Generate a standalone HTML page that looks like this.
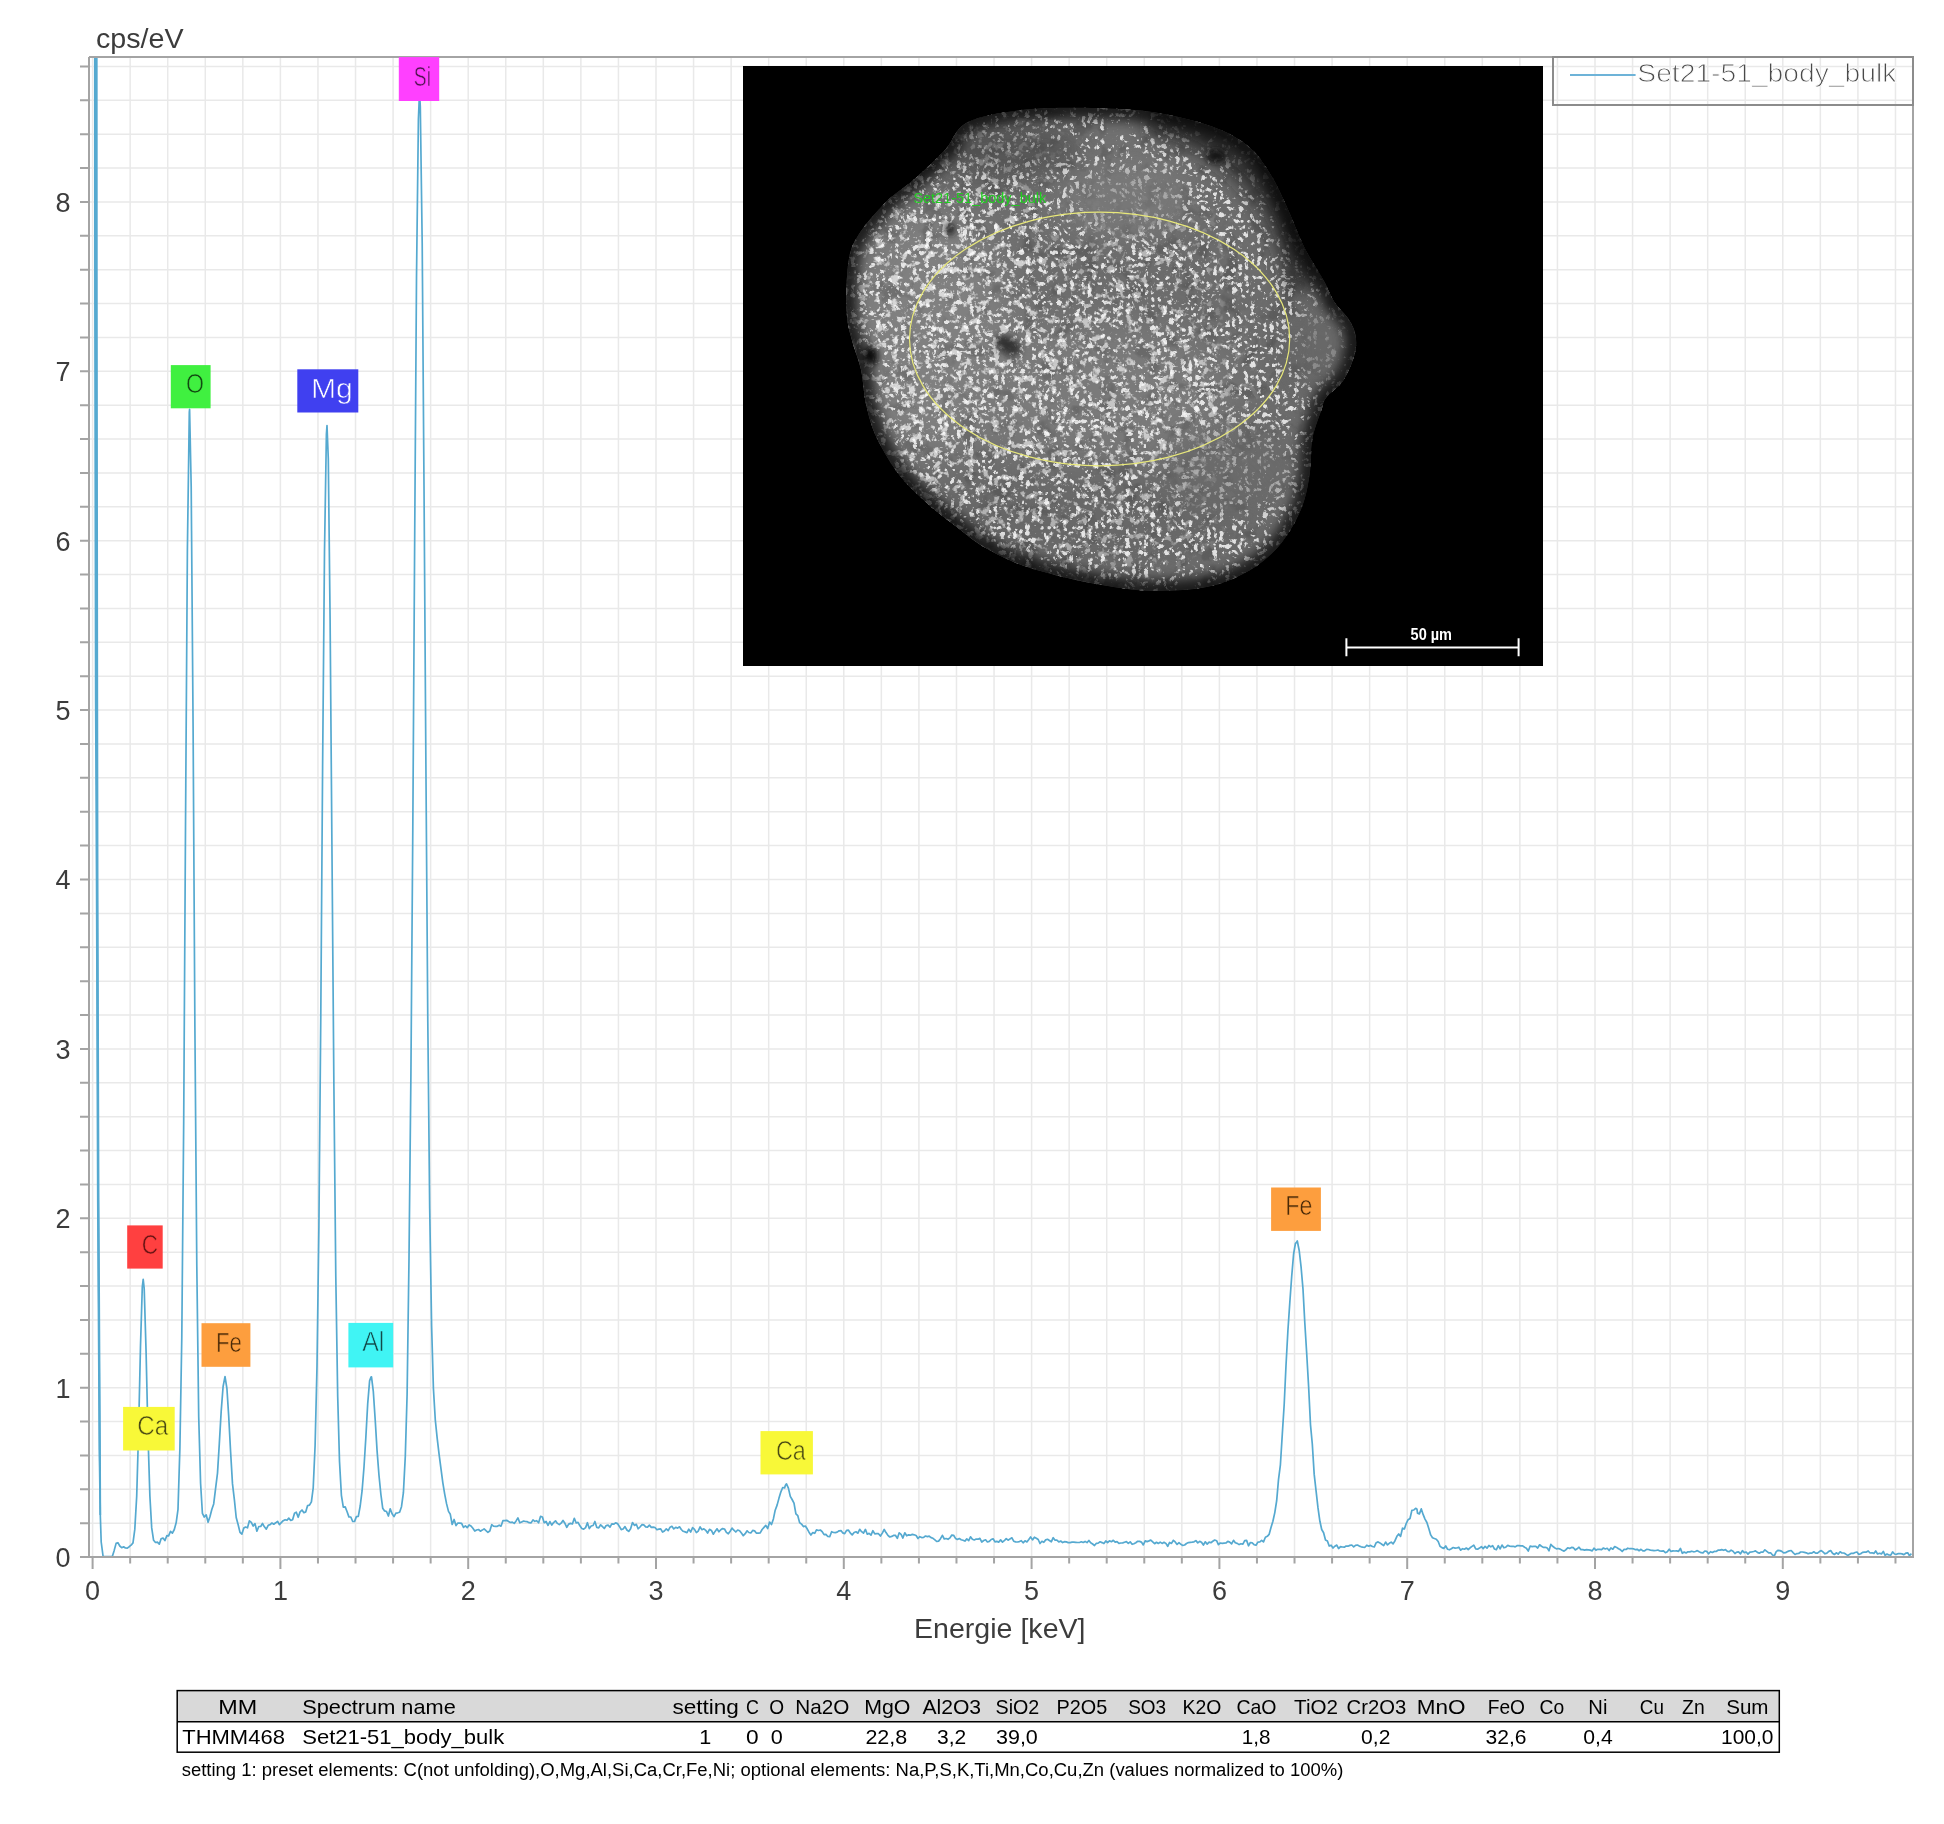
<!DOCTYPE html>
<html><head><meta charset="utf-8"><title>EDX spectrum</title><style>html,body{margin:0;padding:0;background:#fff;width:1944px;height:1824px;overflow:hidden}</style></head><body>
<svg width="1944" height="1824" viewBox="0 0 1944 1824" style="display:block;font-family:'Liberation Sans',sans-serif">
<rect width="1944" height="1824" fill="#ffffff"/>
<path d="M92.60 57V1557M130.16 57V1557M167.72 57V1557M205.28 57V1557M242.84 57V1557M280.40 57V1557M317.96 57V1557M355.52 57V1557M393.08 57V1557M430.64 57V1557M468.20 57V1557M505.76 57V1557M543.32 57V1557M580.88 57V1557M618.44 57V1557M656.00 57V1557M693.56 57V1557M731.12 57V1557M768.68 57V1557M806.24 57V1557M843.80 57V1557M881.36 57V1557M918.92 57V1557M956.48 57V1557M994.04 57V1557M1031.60 57V1557M1069.16 57V1557M1106.72 57V1557M1144.28 57V1557M1181.84 57V1557M1219.40 57V1557M1256.96 57V1557M1294.52 57V1557M1332.08 57V1557M1369.64 57V1557M1407.20 57V1557M1444.76 57V1557M1482.32 57V1557M1519.88 57V1557M1557.44 57V1557M1595.00 57V1557M1632.56 57V1557M1670.12 57V1557M1707.68 57V1557M1745.24 57V1557M1782.80 57V1557M1820.36 57V1557M1857.92 57V1557M1895.48 57V1557M89 1523.22H1913M89 1489.34H1913M89 1455.46H1913M89 1421.58H1913M89 1387.70H1913M89 1353.82H1913M89 1319.94H1913M89 1286.06H1913M89 1252.18H1913M89 1218.30H1913M89 1184.42H1913M89 1150.54H1913M89 1116.66H1913M89 1082.78H1913M89 1048.90H1913M89 1015.02H1913M89 981.14H1913M89 947.26H1913M89 913.38H1913M89 879.50H1913M89 845.62H1913M89 811.74H1913M89 777.86H1913M89 743.98H1913M89 710.10H1913M89 676.22H1913M89 642.34H1913M89 608.46H1913M89 574.58H1913M89 540.70H1913M89 506.82H1913M89 472.94H1913M89 439.06H1913M89 405.18H1913M89 371.30H1913M89 337.42H1913M89 303.54H1913M89 269.66H1913M89 235.78H1913M89 201.90H1913M89 168.02H1913M89 134.14H1913M89 100.26H1913M89 66.38H1913" stroke="#e9e9e9" stroke-width="1.5" fill="none"/>
<path d="M80 1557.10H89M80 1523.22H89M80 1489.34H89M80 1455.46H89M80 1421.58H89M80 1387.70H89M80 1353.82H89M80 1319.94H89M80 1286.06H89M80 1252.18H89M80 1218.30H89M80 1184.42H89M80 1150.54H89M80 1116.66H89M80 1082.78H89M80 1048.90H89M80 1015.02H89M80 981.14H89M80 947.26H89M80 913.38H89M80 879.50H89M80 845.62H89M80 811.74H89M80 777.86H89M80 743.98H89M80 710.10H89M80 676.22H89M80 642.34H89M80 608.46H89M80 574.58H89M80 540.70H89M80 506.82H89M80 472.94H89M80 439.06H89M80 405.18H89M80 371.30H89M80 337.42H89M80 303.54H89M80 269.66H89M80 235.78H89M80 201.90H89M80 168.02H89M80 134.14H89M80 100.26H89M80 66.38H89M92.60 1557V1569M130.16 1557V1563.5M167.72 1557V1563.5M205.28 1557V1563.5M242.84 1557V1563.5M280.40 1557V1569M317.96 1557V1563.5M355.52 1557V1563.5M393.08 1557V1563.5M430.64 1557V1563.5M468.20 1557V1569M505.76 1557V1563.5M543.32 1557V1563.5M580.88 1557V1563.5M618.44 1557V1563.5M656.00 1557V1569M693.56 1557V1563.5M731.12 1557V1563.5M768.68 1557V1563.5M806.24 1557V1563.5M843.80 1557V1569M881.36 1557V1563.5M918.92 1557V1563.5M956.48 1557V1563.5M994.04 1557V1563.5M1031.60 1557V1569M1069.16 1557V1563.5M1106.72 1557V1563.5M1144.28 1557V1563.5M1181.84 1557V1563.5M1219.40 1557V1569M1256.96 1557V1563.5M1294.52 1557V1563.5M1332.08 1557V1563.5M1369.64 1557V1563.5M1407.20 1557V1569M1444.76 1557V1563.5M1482.32 1557V1563.5M1519.88 1557V1563.5M1557.44 1557V1563.5M1595.00 1557V1569M1632.56 1557V1563.5M1670.12 1557V1563.5M1707.68 1557V1563.5M1745.24 1557V1563.5M1782.80 1557V1569M1820.36 1557V1563.5M1857.92 1557V1563.5M1895.48 1557V1563.5" stroke="#a4a4a4" stroke-width="2" fill="none"/>
<defs>
<filter id="clus" x="743" y="66" width="800" height="600" filterUnits="userSpaceOnUse">
<feTurbulence type="fractalNoise" baseFrequency="0.12" numOctaves="4" seed="5" result="n"/>
<feColorMatrix in="n" type="matrix" values="0 0 0 0 1  0 0 0 0 1  0 0 0 0 1  7 0 0 0 -3.9"/>
</filter>
<filter id="dots" x="743" y="66" width="800" height="600" filterUnits="userSpaceOnUse">
<feTurbulence type="turbulence" baseFrequency="0.16" numOctaves="2" seed="3" result="n"/>
<feColorMatrix in="n" type="matrix" values="0 0 0 0 1  0 0 0 0 1  0 0 0 0 1  6 0 0 0 -2.0"/>
</filter>
<filter id="mott" x="743" y="66" width="800" height="600" filterUnits="userSpaceOnUse">
<feTurbulence type="fractalNoise" baseFrequency="0.05" numOctaves="3" seed="11" result="n"/>
<feColorMatrix in="n" type="matrix" values="0 0 0 0 0  0 0 0 0 0  0 0 0 0 0  -6 0 0 0 2.6"/>
</filter>
<filter id="blur10" x="-50%" y="-50%" width="200%" height="200%"><feGaussianBlur stdDeviation="10"/></filter>
<filter id="blur8" x="-50%" y="-50%" width="200%" height="200%"><feGaussianBlur stdDeviation="8"/></filter>
<filter id="blur6" x="-50%" y="-50%" width="200%" height="200%"><feGaussianBlur stdDeviation="6"/></filter>
<filter id="blur20" x="-50%" y="-50%" width="200%" height="200%"><feGaussianBlur stdDeviation="22"/></filter>
<filter id="blur4" x="-50%" y="-50%" width="200%" height="200%"><feGaussianBlur stdDeviation="3"/></filter>
<clipPath id="blobclip"><path d="M1025.7 109.6C1047.7 107.3 1078.2 107.7 1099.9 108.2C1121.6 108.7 1137.2 109.4 1155.8 112.4C1174.4 115.4 1196.3 120.7 1211.7 126.3C1227.1 131.9 1238.2 138.1 1248.0 146.0C1257.8 153.9 1263.9 163.7 1270.4 173.9C1276.9 184.1 1281.6 195.3 1287.2 207.4C1292.8 219.5 1298.0 234.5 1304.0 246.6C1310.0 258.7 1318.4 270.7 1323.5 280.0C1328.6 289.3 1330.5 296.0 1334.7 302.5C1338.9 309.0 1345.2 313.6 1348.7 319.2C1352.2 324.8 1354.8 329.9 1355.7 336.0C1356.6 342.1 1356.4 348.2 1354.3 355.6C1352.2 363.1 1347.8 373.7 1343.1 380.7C1338.4 387.7 1329.9 392.6 1326.3 397.5C1322.7 402.4 1323.8 403.0 1321.5 410.0C1319.2 417.0 1314.4 428.5 1312.4 439.5C1310.4 450.5 1311.5 464.2 1309.6 475.8C1307.7 487.4 1305.9 498.1 1301.2 509.3C1296.5 520.5 1289.5 533.1 1281.6 542.9C1273.7 552.7 1265.3 560.8 1253.7 568.0C1242.1 575.2 1228.0 582.2 1211.7 586.0C1195.4 589.8 1174.4 591.2 1155.8 591.0C1137.2 590.8 1120.9 588.6 1099.9 584.8C1078.9 581.0 1048.9 574.0 1030.0 568.0C1011.1 562.0 999.0 555.6 986.6 548.6C974.2 541.6 965.6 533.7 955.8 526.2C946.0 518.8 937.2 512.3 927.9 503.9C918.6 495.5 908.3 486.6 899.9 475.9C891.5 465.2 883.1 451.2 877.5 439.6C871.9 428.0 869.1 417.7 866.4 406.0C863.6 394.3 863.3 380.3 861.0 369.6C858.7 358.9 854.8 351.0 852.4 341.7C850.0 332.4 847.5 326.8 846.8 313.7C846.1 300.6 846.3 276.4 848.2 263.4C850.1 250.3 851.7 245.7 858.0 235.4C864.3 225.2 876.6 211.2 885.9 201.9C895.2 192.6 904.0 188.2 913.9 179.5C923.8 170.8 936.0 159.6 945.0 150.0C954.0 140.4 954.5 128.7 968.0 122.0C981.5 115.3 1003.7 111.9 1025.7 109.6Z"/></clipPath>
<mask id="clmask" maskUnits="userSpaceOnUse" x="743" y="66" width="800" height="600">
<rect x="743" y="66" width="800" height="600" fill="#000"/>
<g filter="url(#blur20)">
<ellipse cx="960" cy="340" rx="110" ry="170" fill="#fff"/>
<ellipse cx="1090" cy="400" rx="150" ry="110" fill="#e0e0e0"/>
<ellipse cx="1150" cy="270" rx="70" ry="60" fill="#c0c0c0"/>
<ellipse cx="1050" cy="520" rx="160" ry="60" fill="#b0b0b0"/>
<ellipse cx="980" cy="150" rx="80" ry="40" fill="#909090"/>
</g>
</mask>
</defs>
<rect x="743" y="66" width="800" height="600" fill="#000"/>
<g clip-path="url(#blobclip)">
<path d="M1025.7 109.6C1047.7 107.3 1078.2 107.7 1099.9 108.2C1121.6 108.7 1137.2 109.4 1155.8 112.4C1174.4 115.4 1196.3 120.7 1211.7 126.3C1227.1 131.9 1238.2 138.1 1248.0 146.0C1257.8 153.9 1263.9 163.7 1270.4 173.9C1276.9 184.1 1281.6 195.3 1287.2 207.4C1292.8 219.5 1298.0 234.5 1304.0 246.6C1310.0 258.7 1318.4 270.7 1323.5 280.0C1328.6 289.3 1330.5 296.0 1334.7 302.5C1338.9 309.0 1345.2 313.6 1348.7 319.2C1352.2 324.8 1354.8 329.9 1355.7 336.0C1356.6 342.1 1356.4 348.2 1354.3 355.6C1352.2 363.1 1347.8 373.7 1343.1 380.7C1338.4 387.7 1329.9 392.6 1326.3 397.5C1322.7 402.4 1323.8 403.0 1321.5 410.0C1319.2 417.0 1314.4 428.5 1312.4 439.5C1310.4 450.5 1311.5 464.2 1309.6 475.8C1307.7 487.4 1305.9 498.1 1301.2 509.3C1296.5 520.5 1289.5 533.1 1281.6 542.9C1273.7 552.7 1265.3 560.8 1253.7 568.0C1242.1 575.2 1228.0 582.2 1211.7 586.0C1195.4 589.8 1174.4 591.2 1155.8 591.0C1137.2 590.8 1120.9 588.6 1099.9 584.8C1078.9 581.0 1048.9 574.0 1030.0 568.0C1011.1 562.0 999.0 555.6 986.6 548.6C974.2 541.6 965.6 533.7 955.8 526.2C946.0 518.8 937.2 512.3 927.9 503.9C918.6 495.5 908.3 486.6 899.9 475.9C891.5 465.2 883.1 451.2 877.5 439.6C871.9 428.0 869.1 417.7 866.4 406.0C863.6 394.3 863.3 380.3 861.0 369.6C858.7 358.9 854.8 351.0 852.4 341.7C850.0 332.4 847.5 326.8 846.8 313.7C846.1 300.6 846.3 276.4 848.2 263.4C850.1 250.3 851.7 245.7 858.0 235.4C864.3 225.2 876.6 211.2 885.9 201.9C895.2 192.6 904.0 188.2 913.9 179.5C923.8 170.8 936.0 159.6 945.0 150.0C954.0 140.4 954.5 128.7 968.0 122.0C981.5 115.3 1003.7 111.9 1025.7 109.6Z" fill="#6c6c6c"/>
<g filter="url(#blur20)"><ellipse cx="930" cy="330" rx="85" ry="125" fill="#808080"/><ellipse cx="1100" cy="395" rx="135" ry="75" fill="#7a7a7a"/><ellipse cx="1110" cy="185" rx="80" ry="50" fill="#747474"/><ellipse cx="1090" cy="515" rx="170" ry="55" fill="#686868"/><ellipse cx="1320" cy="345" rx="40" ry="50" fill="#626262"/><ellipse cx="1000" cy="150" rx="80" ry="30" fill="#5a5a5a"/></g>
<rect x="743" y="66" width="800" height="600" fill="#000" filter="url(#mott)" opacity="0.12"/>
<rect x="743" y="66" width="800" height="600" fill="#fff" filter="url(#clus)" opacity="0.7" mask="url(#clmask)"/>
<rect x="743" y="66" width="800" height="600" fill="#fff" filter="url(#dots)" opacity="0.8"/>
<g filter="url(#blur10)"><path d="M1150 118 Q1235 135 1275 200 Q1300 245 1305 290" fill="none" stroke="#1e1e1e" stroke-width="34" opacity="0.8"/><ellipse cx="1322" cy="345" rx="30" ry="45" fill="#6a6a6a" opacity="0.75"/><ellipse cx="1130" cy="200" rx="60" ry="35" fill="#7c7c7c" opacity="0.6"/><ellipse cx="1010" cy="150" rx="70" ry="25" fill="#505050" opacity="0.5"/><ellipse cx="1230" cy="470" rx="70" ry="45" fill="#6a6a6a" opacity="0.5"/></g>
<g filter="url(#blur4)"><ellipse cx="871" cy="356" rx="7" ry="10" fill="#101010"/><ellipse cx="1008" cy="345" rx="14" ry="8" transform="rotate(30 1008 345)" fill="#303030"/><ellipse cx="950" cy="229" rx="5" ry="6" fill="#202020"/><ellipse cx="1216" cy="156" rx="10" ry="7" fill="#181818"/></g>
<path d="M1025.7 109.6C1047.7 107.3 1078.2 107.7 1099.9 108.2C1121.6 108.7 1137.2 109.4 1155.8 112.4C1174.4 115.4 1196.3 120.7 1211.7 126.3C1227.1 131.9 1238.2 138.1 1248.0 146.0C1257.8 153.9 1263.9 163.7 1270.4 173.9C1276.9 184.1 1281.6 195.3 1287.2 207.4C1292.8 219.5 1298.0 234.5 1304.0 246.6C1310.0 258.7 1318.4 270.7 1323.5 280.0C1328.6 289.3 1330.5 296.0 1334.7 302.5C1338.9 309.0 1345.2 313.6 1348.7 319.2C1352.2 324.8 1354.8 329.9 1355.7 336.0C1356.6 342.1 1356.4 348.2 1354.3 355.6C1352.2 363.1 1347.8 373.7 1343.1 380.7C1338.4 387.7 1329.9 392.6 1326.3 397.5C1322.7 402.4 1323.8 403.0 1321.5 410.0C1319.2 417.0 1314.4 428.5 1312.4 439.5C1310.4 450.5 1311.5 464.2 1309.6 475.8C1307.7 487.4 1305.9 498.1 1301.2 509.3C1296.5 520.5 1289.5 533.1 1281.6 542.9C1273.7 552.7 1265.3 560.8 1253.7 568.0C1242.1 575.2 1228.0 582.2 1211.7 586.0C1195.4 589.8 1174.4 591.2 1155.8 591.0C1137.2 590.8 1120.9 588.6 1099.9 584.8C1078.9 581.0 1048.9 574.0 1030.0 568.0C1011.1 562.0 999.0 555.6 986.6 548.6C974.2 541.6 965.6 533.7 955.8 526.2C946.0 518.8 937.2 512.3 927.9 503.9C918.6 495.5 908.3 486.6 899.9 475.9C891.5 465.2 883.1 451.2 877.5 439.6C871.9 428.0 869.1 417.7 866.4 406.0C863.6 394.3 863.3 380.3 861.0 369.6C858.7 358.9 854.8 351.0 852.4 341.7C850.0 332.4 847.5 326.8 846.8 313.7C846.1 300.6 846.3 276.4 848.2 263.4C850.1 250.3 851.7 245.7 858.0 235.4C864.3 225.2 876.6 211.2 885.9 201.9C895.2 192.6 904.0 188.2 913.9 179.5C923.8 170.8 936.0 159.6 945.0 150.0C954.0 140.4 954.5 128.7 968.0 122.0C981.5 115.3 1003.7 111.9 1025.7 109.6Z" fill="none" stroke="#000" stroke-width="22" filter="url(#blur6)" opacity="0.75"/>
</g>
<ellipse cx="1099.6" cy="339" rx="190.1" ry="126.8" fill="none" stroke="#e8e87a" stroke-width="1.2"/>
<text x="913.40" y="202.90" font-size="15" fill="#20cc20" textLength="132.82" lengthAdjust="spacingAndGlyphs">Set21-51_body_bulk</text>
<path d="M1346.4 647.4H1518.6M1346.4 638.3V656.3M1518.6 638.3V656.3" stroke="#fff" stroke-width="2" fill="none"/>
<text x="1410.60" y="639.80" font-size="16" font-weight="bold" fill="#fff" textLength="41.41" lengthAdjust="spacingAndGlyphs">50 µm</text>
<path d="M95.8 57.0 L95.9 300.0 L96.5 700.0 L97.1 880.0 L98.2 1200.0 L99.7 1450.0 L100.3 1515.0 L101.2 1542.0 L103.1 1556.5 L112.3 1556.5 L114.2 1550.4 L116.1 1543.4 L117.9 1542.7 L119.8 1546.0 L121.7 1547.7 L123.6 1546.8 L125.4 1548.0 L127.3 1548.1 L129.2 1546.7 L131.1 1545.2 L133.0 1542.9 L134.8 1529.4 L136.7 1496.3 L138.6 1430.3 L140.5 1345.7 L142.3 1286.8 L143.2 1279.3 L144.2 1288.5 L146.1 1352.6 L148.0 1435.8 L149.9 1496.3 L151.7 1527.9 L153.6 1540.3 L155.5 1542.5 L157.4 1542.2 L159.3 1544.2 L161.1 1538.8 L163.0 1538.0 L164.9 1540.6 L166.8 1535.7 L168.6 1535.8 L170.5 1531.4 L172.4 1533.2 L174.3 1529.5 L176.2 1522.6 L178.0 1509.3 L179.9 1448.0 L181.8 1337.1 L183.7 1121.5 L185.5 827.9 L187.4 549.1 L189.3 412.4 L189.6 409.4 L191.2 487.1 L193.1 728.3 L194.9 1027.6 L196.8 1265.2 L198.7 1416.4 L200.6 1483.5 L202.4 1513.3 L204.3 1517.0 L206.2 1514.8 L208.1 1522.3 L210.0 1516.5 L211.8 1509.5 L213.7 1503.9 L215.6 1488.3 L217.5 1473.1 L219.3 1443.9 L221.2 1411.1 L223.1 1386.5 L225.0 1376.7 L225.0 1376.5 L226.9 1388.3 L228.7 1416.1 L230.6 1451.7 L232.5 1483.9 L234.4 1499.8 L236.2 1517.5 L238.1 1524.5 L240.0 1532.4 L241.9 1534.1 L243.8 1528.1 L245.6 1527.0 L247.5 1527.8 L249.4 1520.8 L251.3 1522.4 L253.2 1526.1 L255.0 1523.6 L256.9 1531.2 L258.8 1526.5 L260.7 1526.5 L262.5 1523.5 L264.4 1526.8 L266.3 1529.1 L268.2 1525.3 L270.1 1524.6 L271.9 1523.0 L273.8 1524.2 L275.7 1522.8 L277.6 1521.3 L279.4 1524.7 L281.3 1522.7 L283.2 1520.7 L285.1 1519.7 L287.0 1520.3 L288.8 1518.1 L290.7 1520.5 L292.6 1519.7 L294.5 1513.3 L296.3 1512.2 L298.2 1517.3 L300.1 1511.8 L302.0 1510.0 L303.9 1512.7 L305.7 1511.9 L307.6 1505.6 L309.5 1505.2 L311.4 1501.8 L313.2 1488.0 L315.1 1445.5 L317.0 1366.5 L318.9 1226.8 L320.8 1014.7 L322.6 767.1 L324.5 551.7 L326.4 434.3 L327.0 425.5 L328.3 459.0 L330.1 619.6 L332.0 854.4 L333.9 1086.8 L335.8 1276.8 L337.7 1396.5 L339.5 1461.2 L341.4 1495.3 L343.3 1507.2 L345.2 1506.9 L347.1 1511.7 L348.9 1516.9 L350.8 1517.0 L352.7 1521.5 L354.6 1521.4 L356.4 1516.6 L358.3 1516.4 L360.2 1506.0 L362.1 1490.7 L364.0 1467.0 L365.8 1438.3 L367.7 1403.7 L369.6 1380.9 L371.0 1377.0 L371.5 1376.8 L373.3 1391.3 L375.2 1419.7 L377.1 1451.1 L379.0 1475.5 L380.9 1494.5 L382.7 1508.2 L384.6 1510.9 L386.5 1511.5 L388.4 1516.0 L390.2 1508.8 L392.1 1513.7 L394.0 1516.6 L395.9 1513.2 L397.8 1512.8 L399.6 1512.2 L401.5 1506.7 L403.4 1492.7 L405.3 1456.3 L407.1 1394.7 L409.0 1258.7 L410.9 1076.0 L412.8 829.2 L414.7 536.0 L416.5 278.1 L418.4 119.2 L419.5 92.6 L420.3 106.6 L422.2 243.0 L424.0 485.2 L425.9 764.8 L427.8 1021.4 L429.7 1208.4 L431.6 1325.8 L433.4 1388.3 L435.3 1420.0 L437.2 1438.3 L439.1 1454.3 L441.0 1468.9 L442.8 1482.6 L444.7 1494.1 L446.6 1503.9 L448.5 1511.4 L450.3 1514.3 L452.2 1524.5 L454.1 1519.5 L456.0 1525.6 L457.9 1523.1 L459.7 1523.1 L461.6 1523.3 L463.5 1527.4 L465.4 1525.9 L467.2 1527.7 L469.1 1524.9 L471.0 1526.0 L472.9 1528.3 L474.8 1531.1 L476.6 1530.0 L478.5 1529.5 L480.4 1531.2 L482.3 1530.1 L484.1 1528.9 L486.0 1530.7 L487.9 1532.3 L489.8 1531.0 L491.7 1524.7 L493.5 1526.2 L495.4 1526.3 L497.3 1526.3 L499.2 1525.2 L501.0 1526.2 L502.9 1520.7 L504.8 1520.7 L506.7 1520.3 L508.6 1521.5 L510.4 1522.5 L512.3 1522.1 L514.2 1523.4 L516.1 1520.9 L517.9 1517.9 L519.8 1522.8 L521.7 1521.9 L523.6 1521.0 L525.5 1521.5 L527.3 1521.7 L529.2 1522.7 L531.1 1522.9 L533.0 1519.9 L534.8 1521.3 L536.7 1520.7 L538.6 1522.8 L540.5 1516.4 L542.4 1517.0 L544.2 1522.7 L546.1 1521.5 L548.0 1525.3 L549.9 1521.6 L551.8 1525.1 L553.6 1522.6 L555.5 1520.8 L557.4 1523.4 L559.3 1524.6 L561.1 1523.2 L563.0 1520.5 L564.9 1523.3 L566.8 1527.3 L568.7 1524.1 L570.5 1523.4 L572.4 1524.0 L574.3 1518.3 L576.2 1523.0 L578.0 1522.4 L579.9 1525.8 L581.8 1528.5 L583.7 1529.2 L585.6 1527.6 L587.4 1522.7 L589.3 1528.6 L591.2 1526.0 L593.1 1525.5 L594.9 1521.5 L596.8 1527.4 L598.7 1527.9 L600.6 1524.8 L602.5 1526.7 L604.3 1528.5 L606.2 1525.5 L608.1 1525.1 L610.0 1527.1 L611.8 1523.9 L613.7 1524.2 L615.6 1522.9 L617.5 1523.6 L619.4 1526.4 L621.2 1529.6 L623.1 1529.0 L625.0 1526.6 L626.9 1530.0 L628.7 1531.4 L630.6 1528.7 L632.5 1522.5 L634.4 1525.4 L636.3 1524.3 L638.1 1528.8 L640.0 1527.0 L641.9 1524.7 L643.8 1524.9 L645.7 1526.8 L647.5 1527.1 L649.4 1525.1 L651.3 1527.4 L653.2 1527.1 L655.0 1527.5 L656.9 1529.7 L658.8 1529.1 L660.7 1528.8 L662.6 1532.1 L664.4 1531.0 L666.3 1528.8 L668.2 1530.6 L670.1 1527.2 L671.9 1526.3 L673.8 1528.9 L675.7 1527.3 L677.6 1528.1 L679.5 1526.8 L681.3 1529.5 L683.2 1531.3 L685.1 1531.9 L687.0 1532.7 L688.8 1529.2 L690.7 1532.0 L692.6 1527.6 L694.5 1529.3 L696.4 1532.6 L698.2 1531.2 L700.1 1526.9 L702.0 1529.7 L703.9 1528.8 L705.7 1530.3 L707.6 1533.0 L709.5 1529.3 L711.4 1530.4 L713.3 1534.2 L715.1 1531.4 L717.0 1528.8 L718.9 1531.8 L720.8 1529.7 L722.6 1528.6 L724.5 1529.0 L726.4 1532.4 L728.3 1533.8 L730.2 1531.2 L732.0 1528.1 L733.9 1530.2 L735.8 1532.0 L737.7 1530.0 L739.6 1530.7 L741.4 1533.0 L743.3 1535.7 L745.2 1533.7 L747.1 1530.8 L748.9 1532.5 L750.8 1533.0 L752.7 1530.4 L754.6 1530.9 L756.5 1533.2 L758.3 1533.2 L760.2 1532.8 L762.1 1529.5 L764.0 1527.4 L765.8 1525.4 L767.7 1528.5 L769.6 1522.0 L771.5 1524.6 L773.4 1518.9 L775.2 1510.2 L777.1 1505.1 L779.0 1498.1 L780.9 1491.8 L782.7 1487.5 L784.6 1487.9 L785.4 1485.3 L786.5 1483.9 L788.4 1488.1 L790.3 1496.4 L792.1 1499.5 L794.0 1503.2 L795.9 1513.9 L797.8 1515.7 L799.6 1522.6 L801.5 1524.1 L803.4 1526.6 L805.3 1526.0 L807.2 1528.8 L809.0 1532.2 L810.9 1535.1 L812.8 1532.6 L814.7 1533.3 L816.5 1529.8 L818.4 1530.5 L820.3 1530.0 L822.2 1531.7 L824.1 1534.6 L825.9 1534.4 L827.8 1536.5 L829.7 1536.7 L831.6 1531.7 L833.5 1532.5 L835.3 1532.6 L837.2 1532.1 L839.1 1530.8 L841.0 1530.6 L842.8 1532.9 L844.7 1533.7 L846.6 1530.4 L848.5 1530.2 L850.4 1533.1 L852.2 1534.9 L854.1 1532.5 L856.0 1531.8 L857.9 1533.2 L859.7 1529.3 L861.6 1531.7 L863.5 1533.2 L865.4 1529.4 L867.3 1534.2 L869.1 1533.4 L871.0 1535.1 L872.9 1530.7 L874.8 1533.9 L876.6 1533.7 L878.5 1533.7 L880.4 1536.0 L882.3 1533.1 L884.2 1529.5 L886.0 1532.6 L887.9 1535.3 L889.8 1537.0 L891.7 1536.4 L893.5 1535.4 L895.4 1535.3 L897.3 1538.4 L899.2 1532.8 L901.1 1534.4 L902.9 1538.0 L904.8 1532.8 L906.7 1535.8 L908.6 1534.8 L910.4 1535.2 L912.3 1534.4 L914.2 1534.8 L916.1 1535.5 L918.0 1538.5 L919.8 1536.7 L921.7 1537.6 L923.6 1537.4 L925.5 1536.0 L927.4 1536.6 L929.2 1536.2 L931.1 1537.6 L933.0 1538.3 L934.9 1539.8 L936.7 1541.5 L938.6 1541.1 L940.5 1538.7 L942.4 1535.3 L944.3 1539.0 L946.1 1538.5 L948.0 1539.3 L949.9 1537.9 L951.8 1535.1 L953.6 1535.3 L955.5 1538.4 L957.4 1539.4 L959.3 1538.5 L961.2 1539.7 L963.0 1540.2 L964.9 1541.1 L966.8 1538.9 L968.7 1540.6 L970.5 1536.8 L972.4 1539.3 L974.3 1540.0 L976.2 1539.1 L978.1 1539.2 L979.9 1538.4 L981.8 1542.1 L983.7 1540.5 L985.6 1539.8 L987.4 1542.0 L989.3 1541.4 L991.2 1539.5 L993.1 1538.8 L995.0 1541.9 L996.8 1541.4 L998.7 1542.1 L1000.6 1539.9 L1002.5 1542.1 L1004.3 1540.7 L1006.2 1538.6 L1008.1 1540.2 L1010.0 1538.9 L1011.9 1537.8 L1013.7 1541.2 L1015.6 1541.9 L1017.5 1542.0 L1019.4 1541.6 L1021.3 1540.7 L1023.1 1542.8 L1025.0 1540.8 L1026.9 1541.9 L1028.8 1539.4 L1030.6 1536.9 L1032.5 1539.9 L1034.4 1537.2 L1036.3 1538.2 L1038.2 1539.5 L1040.0 1543.5 L1041.9 1541.3 L1043.8 1542.3 L1045.7 1539.9 L1047.5 1539.3 L1049.4 1540.5 L1051.3 1541.8 L1053.2 1537.7 L1055.1 1540.2 L1056.9 1540.2 L1058.8 1541.9 L1060.7 1541.0 L1062.6 1542.6 L1064.4 1541.7 L1066.3 1541.9 L1068.2 1542.6 L1070.1 1542.6 L1072.0 1542.2 L1073.8 1542.1 L1075.7 1542.3 L1077.6 1542.5 L1079.5 1542.5 L1081.3 1541.8 L1083.2 1542.5 L1085.1 1541.4 L1087.0 1542.6 L1088.9 1540.5 L1090.7 1542.8 L1092.6 1544.0 L1094.5 1545.5 L1096.4 1543.3 L1098.2 1543.1 L1100.1 1541.8 L1102.0 1542.6 L1103.9 1543.6 L1105.8 1541.0 L1107.6 1542.5 L1109.5 1540.8 L1111.4 1541.7 L1113.3 1540.3 L1115.2 1542.2 L1117.0 1541.6 L1118.9 1543.4 L1120.8 1543.0 L1122.7 1542.9 L1124.5 1542.2 L1126.4 1541.6 L1128.3 1543.3 L1130.2 1541.8 L1132.1 1544.3 L1133.9 1543.7 L1135.8 1542.7 L1137.7 1541.3 L1139.6 1541.4 L1141.4 1542.1 L1143.3 1544.9 L1145.2 1540.9 L1147.1 1541.6 L1149.0 1540.9 L1150.8 1540.1 L1152.7 1541.9 L1154.6 1543.7 L1156.5 1542.3 L1158.3 1543.5 L1160.2 1542.1 L1162.1 1543.4 L1164.0 1542.3 L1165.9 1543.4 L1167.7 1546.3 L1169.6 1542.4 L1171.5 1543.4 L1173.4 1540.3 L1175.2 1541.9 L1177.1 1544.4 L1179.0 1542.7 L1180.9 1544.3 L1182.8 1545.4 L1184.6 1545.0 L1186.5 1543.5 L1188.4 1542.6 L1190.3 1542.3 L1192.1 1542.2 L1194.0 1541.8 L1195.9 1540.6 L1197.8 1542.9 L1199.7 1541.4 L1201.5 1542.2 L1203.4 1545.0 L1205.3 1541.8 L1207.2 1544.1 L1209.1 1542.1 L1210.9 1542.7 L1212.8 1541.3 L1214.7 1540.0 L1216.6 1540.7 L1218.4 1544.7 L1220.3 1543.0 L1222.2 1543.4 L1224.1 1543.2 L1226.0 1543.0 L1227.8 1541.4 L1229.7 1542.1 L1231.6 1543.9 L1233.5 1540.3 L1235.3 1542.7 L1237.2 1543.4 L1239.1 1544.6 L1241.0 1543.7 L1242.9 1544.2 L1244.7 1540.7 L1246.6 1540.4 L1248.5 1545.8 L1250.4 1542.5 L1252.2 1542.9 L1254.1 1544.7 L1256.0 1545.2 L1257.9 1542.1 L1259.8 1542.0 L1261.6 1540.3 L1263.5 1541.9 L1265.4 1537.2 L1267.3 1536.3 L1269.1 1534.4 L1271.0 1527.5 L1272.9 1521.3 L1274.8 1512.6 L1276.7 1500.5 L1278.5 1479.6 L1280.4 1464.8 L1282.3 1434.1 L1284.2 1404.3 L1286.0 1365.5 L1287.9 1330.7 L1289.8 1302.6 L1291.7 1276.4 L1293.6 1254.0 L1295.4 1243.6 L1296.7 1242.0 L1297.3 1241.0 L1299.2 1250.5 L1301.1 1267.2 L1303.0 1289.1 L1304.8 1322.8 L1306.7 1353.5 L1308.6 1386.3 L1310.5 1424.8 L1312.3 1444.0 L1314.2 1474.4 L1316.1 1491.2 L1318.0 1507.9 L1319.9 1521.3 L1321.7 1529.5 L1323.6 1532.7 L1325.5 1540.0 L1327.4 1541.0 L1329.2 1546.0 L1331.1 1545.2 L1333.0 1548.0 L1334.9 1546.2 L1336.8 1545.1 L1338.6 1548.6 L1340.5 1546.7 L1342.4 1547.0 L1344.3 1547.2 L1346.1 1546.1 L1348.0 1546.2 L1349.9 1545.4 L1351.8 1545.0 L1353.7 1546.9 L1355.5 1545.4 L1357.4 1545.0 L1359.3 1546.1 L1361.2 1546.8 L1363.0 1547.2 L1364.9 1547.3 L1366.8 1545.2 L1368.7 1546.2 L1370.6 1545.4 L1372.4 1546.5 L1374.3 1546.9 L1376.2 1542.7 L1378.1 1541.9 L1379.9 1542.9 L1381.8 1544.2 L1383.7 1545.6 L1385.6 1542.1 L1387.5 1544.9 L1389.3 1543.3 L1391.2 1542.1 L1393.1 1543.9 L1395.0 1540.7 L1396.9 1536.3 L1398.7 1533.9 L1400.6 1536.4 L1402.5 1528.2 L1404.4 1528.9 L1406.2 1523.6 L1408.1 1519.7 L1410.0 1518.5 L1411.9 1510.3 L1413.8 1510.0 L1415.6 1508.3 L1417.0 1509.3 L1417.5 1513.1 L1419.4 1513.9 L1421.3 1508.9 L1423.1 1514.4 L1425.0 1519.1 L1426.9 1522.5 L1428.8 1528.5 L1430.7 1534.9 L1432.5 1537.7 L1434.4 1538.5 L1436.3 1539.2 L1438.2 1541.5 L1440.0 1546.3 L1441.9 1547.6 L1443.8 1548.4 L1445.7 1546.0 L1447.6 1549.2 L1449.4 1549.8 L1451.3 1548.8 L1453.2 1547.5 L1455.1 1548.1 L1456.9 1548.0 L1458.8 1547.2 L1460.7 1550.2 L1462.6 1548.7 L1464.5 1549.2 L1466.3 1548.0 L1468.2 1549.5 L1470.1 1547.8 L1472.0 1546.4 L1473.8 1545.2 L1475.7 1548.8 L1477.6 1549.2 L1479.5 1548.1 L1481.4 1546.7 L1483.2 1548.6 L1485.1 1546.3 L1487.0 1548.2 L1488.9 1545.5 L1490.8 1546.9 L1492.6 1545.6 L1494.5 1549.0 L1496.4 1549.7 L1498.3 1545.7 L1500.1 1548.9 L1502.0 1545.1 L1503.9 1547.8 L1505.8 1547.2 L1507.7 1545.3 L1509.5 1546.1 L1511.4 1546.4 L1513.3 1546.3 L1515.2 1546.9 L1517.0 1545.7 L1518.9 1545.6 L1520.8 1545.8 L1522.7 1545.9 L1524.6 1547.3 L1526.4 1548.2 L1528.3 1551.0 L1530.2 1546.0 L1532.1 1546.6 L1533.9 1546.4 L1535.8 1546.3 L1537.7 1548.0 L1539.6 1544.8 L1541.5 1546.2 L1543.3 1547.4 L1545.2 1547.3 L1547.1 1547.9 L1549.0 1550.8 L1550.8 1544.4 L1552.7 1546.3 L1554.6 1547.7 L1556.5 1548.9 L1558.4 1548.5 L1560.2 1549.1 L1562.1 1550.3 L1564.0 1551.1 L1565.9 1549.7 L1567.7 1547.8 L1569.6 1548.4 L1571.5 1547.4 L1573.4 1547.7 L1575.3 1549.9 L1577.1 1548.8 L1579.0 1547.2 L1580.9 1549.6 L1582.8 1549.6 L1584.7 1550.1 L1586.5 1549.6 L1588.4 1549.8 L1590.3 1550.1 L1592.2 1550.9 L1594.0 1548.1 L1595.9 1550.1 L1597.8 1549.3 L1599.7 1549.4 L1601.6 1549.6 L1603.4 1548.0 L1605.3 1549.0 L1607.2 1548.3 L1609.1 1550.5 L1610.9 1547.9 L1612.8 1549.2 L1614.7 1546.5 L1616.6 1547.4 L1618.5 1548.8 L1620.3 1549.6 L1622.2 1551.5 L1624.1 1549.4 L1626.0 1549.5 L1627.8 1548.2 L1629.7 1548.7 L1631.6 1548.5 L1633.5 1548.8 L1635.4 1549.7 L1637.2 1549.3 L1639.1 1550.7 L1641.0 1549.3 L1642.9 1550.8 L1644.7 1550.8 L1646.6 1549.4 L1648.5 1549.5 L1650.4 1550.1 L1652.3 1550.3 L1654.1 1550.6 L1656.0 1550.5 L1657.9 1550.0 L1659.8 1551.0 L1661.6 1551.2 L1663.5 1550.9 L1665.4 1552.7 L1667.3 1551.8 L1669.2 1549.2 L1671.0 1551.5 L1672.9 1550.9 L1674.8 1551.0 L1676.7 1550.9 L1678.6 1551.3 L1680.4 1548.4 L1682.3 1553.3 L1684.2 1552.0 L1686.1 1553.0 L1687.9 1551.8 L1689.8 1551.9 L1691.7 1551.2 L1693.6 1551.8 L1695.5 1551.5 L1697.3 1550.6 L1699.2 1551.8 L1701.1 1552.7 L1703.0 1552.9 L1704.8 1551.0 L1706.7 1551.4 L1708.6 1553.8 L1710.5 1551.7 L1712.4 1552.5 L1714.2 1551.4 L1716.1 1551.5 L1718.0 1550.2 L1719.9 1550.1 L1721.7 1549.6 L1723.6 1550.3 L1725.5 1549.6 L1727.4 1551.3 L1729.3 1551.7 L1731.1 1550.1 L1733.0 1551.3 L1734.9 1553.5 L1736.8 1552.1 L1738.6 1551.9 L1740.5 1553.8 L1742.4 1550.7 L1744.3 1552.6 L1746.2 1552.0 L1748.0 1554.2 L1749.9 1552.2 L1751.8 1551.9 L1753.7 1551.5 L1755.5 1550.9 L1757.4 1552.4 L1759.3 1553.2 L1761.2 1552.1 L1763.1 1552.1 L1764.9 1549.8 L1766.8 1551.3 L1768.7 1552.9 L1770.6 1552.8 L1772.5 1555.0 L1774.3 1555.9 L1776.2 1551.6 L1778.1 1550.3 L1780.0 1550.6 L1781.8 1551.4 L1783.7 1552.9 L1785.6 1552.7 L1787.5 1551.6 L1789.4 1550.8 L1791.2 1550.5 L1793.1 1552.6 L1795.0 1554.5 L1796.9 1553.6 L1798.7 1553.5 L1800.6 1552.0 L1802.5 1552.0 L1804.4 1552.4 L1806.3 1552.8 L1808.1 1553.7 L1810.0 1553.1 L1811.9 1553.1 L1813.8 1551.8 L1815.6 1553.1 L1817.5 1553.2 L1819.4 1551.6 L1821.3 1550.6 L1823.2 1552.2 L1825.0 1553.8 L1826.9 1553.1 L1828.8 1551.4 L1830.7 1550.6 L1832.5 1553.2 L1834.4 1554.5 L1836.3 1552.8 L1838.2 1554.1 L1840.1 1551.8 L1841.9 1553.0 L1843.8 1553.0 L1845.7 1554.1 L1847.6 1555.4 L1849.4 1554.4 L1851.3 1553.3 L1853.2 1553.4 L1855.1 1552.5 L1857.0 1552.0 L1858.8 1554.5 L1860.7 1553.8 L1862.6 1552.4 L1864.5 1552.1 L1866.4 1552.1 L1868.2 1551.0 L1870.1 1553.0 L1872.0 1552.8 L1873.9 1553.4 L1875.7 1551.0 L1877.6 1554.0 L1879.5 1553.3 L1881.4 1553.9 L1883.3 1551.4 L1885.1 1555.3 L1887.0 1554.0 L1888.9 1555.0 L1890.8 1555.2 L1892.6 1551.9 L1894.5 1554.0 L1896.4 1554.3 L1898.3 1553.6 L1900.2 1553.5 L1902.0 1553.9 L1903.9 1554.6 L1905.8 1553.2 L1907.7 1552.8 L1909.5 1555.7 L1911.4 1553.7" stroke="#55a9d0" stroke-width="1.7" fill="none" stroke-linejoin="round"/>
<path d="M93.95 57.0 L94.05 300.0 L94.80 700.0 L95.70 880.0 L96.90 1200.0 L98.50 1450.0 L99.40 1515.0 L101.20 1515.0 L100.90 1450.0 L99.50 1200.0 L98.50 880.0 L98.20 700.0 L97.75 300.0 L97.65 57.0Z" fill="#55a9d0"/>
<path d="M89 57V1557H1913V57H89" stroke="#a4a4a4" stroke-width="2" fill="none"/>
<rect x="1553" y="57" width="360" height="48" fill="none" stroke="#8c8c8c" stroke-width="2"/>
<path d="M1570 75H1635.6" stroke="#6db3d8" stroke-width="1.8"/>
<text x="1637.30" y="81.60" font-size="26" fill="#4a4a4a" textLength="259.03" lengthAdjust="spacingAndGlyphs" stroke="#ffffff" stroke-width="0.9">Set21-51_body_bulk</text>
<rect x="398.8" y="57.1" width="40.4" height="43.9" fill="#ff40ff"/>
<text x="413.80" y="85.60" font-size="27" fill="#501450" textLength="17.18" lengthAdjust="spacingAndGlyphs" stroke="#ff40ff" stroke-width="0.6">Si</text>
<rect x="170.8" y="365.1" width="39.8" height="43.2" fill="#40f040"/>
<text x="185.90" y="393.20" font-size="27" fill="#124a12" textLength="18.05" lengthAdjust="spacingAndGlyphs" stroke="#40f040" stroke-width="0.6">O</text>
<rect x="297.3" y="369.3" width="61.0" height="43.2" fill="#4040f0"/>
<text x="310.90" y="398.10" font-size="27" fill="#ffffff" textLength="41.98" lengthAdjust="spacingAndGlyphs" stroke="#4040f0" stroke-width="0.6">Mg</text>
<rect x="127.2" y="1225.4" width="35.5" height="43.2" fill="#ff4040"/>
<text x="141.80" y="1253.80" font-size="27" fill="#6a1414" textLength="16.25" lengthAdjust="spacingAndGlyphs" stroke="#ff4040" stroke-width="0.6">C</text>
<rect x="123.1" y="1406.9" width="51.6" height="43.6" fill="#f8f838"/>
<text x="137.30" y="1435.30" font-size="27" fill="#4a4a14" textLength="30.86" lengthAdjust="spacingAndGlyphs" stroke="#f8f838" stroke-width="0.6">Ca</text>
<rect x="201.5" y="1323.2" width="48.9" height="43.6" fill="#fd9e3e"/>
<text x="216.00" y="1351.50" font-size="27" fill="#4a2a08" textLength="25.95" lengthAdjust="spacingAndGlyphs" stroke="#fd9e3e" stroke-width="0.6">Fe</text>
<rect x="348.4" y="1322.9" width="44.8" height="44.5" fill="#40f4f4"/>
<text x="362.20" y="1351.10" font-size="27" fill="#124a4a" textLength="22.18" lengthAdjust="spacingAndGlyphs" stroke="#40f4f4" stroke-width="0.6">Al</text>
<rect x="760.5" y="1431.1" width="52.4" height="43.3" fill="#f8f838"/>
<text x="775.90" y="1459.70" font-size="27" fill="#4a4a14" textLength="29.96" lengthAdjust="spacingAndGlyphs" stroke="#f8f838" stroke-width="0.6">Ca</text>
<rect x="1271.1" y="1187.5" width="49.8" height="43.4" fill="#fd9e3e"/>
<text x="1285.20" y="1215.30" font-size="27" fill="#4a2a08" textLength="27.15" lengthAdjust="spacingAndGlyphs" stroke="#fd9e3e" stroke-width="0.6">Fe</text>
<text x="70.5" y="1566.9" font-size="27" fill="#3c3c3c" text-anchor="end">0</text>
<text x="70.5" y="1397.5" font-size="27" fill="#3c3c3c" text-anchor="end">1</text>
<text x="70.5" y="1228.1" font-size="27" fill="#3c3c3c" text-anchor="end">2</text>
<text x="70.5" y="1058.7" font-size="27" fill="#3c3c3c" text-anchor="end">3</text>
<text x="70.5" y="889.3" font-size="27" fill="#3c3c3c" text-anchor="end">4</text>
<text x="70.5" y="719.9" font-size="27" fill="#3c3c3c" text-anchor="end">5</text>
<text x="70.5" y="550.5" font-size="27" fill="#3c3c3c" text-anchor="end">6</text>
<text x="70.5" y="381.1" font-size="27" fill="#3c3c3c" text-anchor="end">7</text>
<text x="70.5" y="211.7" font-size="27" fill="#3c3c3c" text-anchor="end">8</text>
<text x="92.6" y="1599.8" font-size="27" fill="#3c3c3c" text-anchor="middle">0</text>
<text x="280.4" y="1599.8" font-size="27" fill="#3c3c3c" text-anchor="middle">1</text>
<text x="468.2" y="1599.8" font-size="27" fill="#3c3c3c" text-anchor="middle">2</text>
<text x="656.0" y="1599.8" font-size="27" fill="#3c3c3c" text-anchor="middle">3</text>
<text x="843.8" y="1599.8" font-size="27" fill="#3c3c3c" text-anchor="middle">4</text>
<text x="1031.6" y="1599.8" font-size="27" fill="#3c3c3c" text-anchor="middle">5</text>
<text x="1219.4" y="1599.8" font-size="27" fill="#3c3c3c" text-anchor="middle">6</text>
<text x="1407.2" y="1599.8" font-size="27" fill="#3c3c3c" text-anchor="middle">7</text>
<text x="1595.0" y="1599.8" font-size="27" fill="#3c3c3c" text-anchor="middle">8</text>
<text x="1782.8" y="1599.8" font-size="27" fill="#3c3c3c" text-anchor="middle">9</text>
<text x="96.00" y="47.60" font-size="28" fill="#3c3c3c" textLength="87.66" lengthAdjust="spacingAndGlyphs">cps/eV</text>
<text x="914.00" y="1637.80" font-size="28" fill="#3c3c3c" textLength="171.56" lengthAdjust="spacingAndGlyphs">Energie [keV]</text>
<rect x="177.2" y="1690.6" width="1602.1" height="31.1" fill="#d9d9d9"/>
<rect x="177.2" y="1690.6" width="1602.1" height="61.6" fill="none" stroke="#000" stroke-width="1.5"/>
<path d="M177.2 1721.7H1779.3" stroke="#000" stroke-width="1.5"/>
<text x="218.30" y="1713.90" font-size="21" fill="#000" textLength="38.93" lengthAdjust="spacingAndGlyphs">MM</text>
<text x="302.20" y="1713.90" font-size="21" fill="#000" textLength="153.57" lengthAdjust="spacingAndGlyphs">Spectrum name</text>
<text x="672.40" y="1713.90" font-size="21" fill="#000" textLength="66.53" lengthAdjust="spacingAndGlyphs">setting</text>
<text x="746.00" y="1713.90" font-size="21" fill="#000" textLength="12.94" lengthAdjust="spacingAndGlyphs">C</text>
<text x="769.30" y="1713.90" font-size="21" fill="#000" textLength="14.86" lengthAdjust="spacingAndGlyphs">O</text>
<text x="795.30" y="1713.90" font-size="21" fill="#000" textLength="54.05" lengthAdjust="spacingAndGlyphs">Na2O</text>
<text x="864.20" y="1713.90" font-size="21" fill="#000" textLength="46.24" lengthAdjust="spacingAndGlyphs">MgO</text>
<text x="922.40" y="1713.90" font-size="21" fill="#000" textLength="58.69" lengthAdjust="spacingAndGlyphs">Al2O3</text>
<text x="995.50" y="1713.90" font-size="21" fill="#000" textLength="43.76" lengthAdjust="spacingAndGlyphs">SiO2</text>
<text x="1056.60" y="1713.90" font-size="21" fill="#000" textLength="50.74" lengthAdjust="spacingAndGlyphs">P2O5</text>
<text x="1128.20" y="1713.90" font-size="21" fill="#000" textLength="37.92" lengthAdjust="spacingAndGlyphs">SO3</text>
<text x="1182.50" y="1713.90" font-size="21" fill="#000" textLength="38.82" lengthAdjust="spacingAndGlyphs">K2O</text>
<text x="1236.40" y="1713.90" font-size="21" fill="#000" textLength="40.12" lengthAdjust="spacingAndGlyphs">CaO</text>
<text x="1294.10" y="1713.90" font-size="21" fill="#000" textLength="43.90" lengthAdjust="spacingAndGlyphs">TiO2</text>
<text x="1346.60" y="1713.90" font-size="21" fill="#000" textLength="59.61" lengthAdjust="spacingAndGlyphs">Cr2O3</text>
<text x="1416.70" y="1713.90" font-size="21" fill="#000" textLength="48.75" lengthAdjust="spacingAndGlyphs">MnO</text>
<text x="1487.70" y="1713.90" font-size="21" fill="#000" textLength="37.30" lengthAdjust="spacingAndGlyphs">FeO</text>
<text x="1539.50" y="1713.90" font-size="21" fill="#000" textLength="24.67" lengthAdjust="spacingAndGlyphs">Co</text>
<text x="1588.30" y="1713.90" font-size="21" fill="#000" textLength="19.09" lengthAdjust="spacingAndGlyphs">Ni</text>
<text x="1639.80" y="1713.90" font-size="21" fill="#000" textLength="24.07" lengthAdjust="spacingAndGlyphs">Cu</text>
<text x="1682.10" y="1713.90" font-size="21" fill="#000" textLength="22.54" lengthAdjust="spacingAndGlyphs">Zn</text>
<text x="1726.20" y="1713.90" font-size="21" fill="#000" textLength="42.33" lengthAdjust="spacingAndGlyphs">Sum</text>
<text x="182.20" y="1744.40" font-size="21" fill="#000" textLength="102.75" lengthAdjust="spacingAndGlyphs">THMM468</text>
<text x="302.20" y="1744.40" font-size="21" fill="#000" textLength="202.07" lengthAdjust="spacingAndGlyphs">Set21-51_body_bulk</text>
<text x="699.20" y="1744.40" font-size="21" fill="#000" textLength="12.03" lengthAdjust="spacingAndGlyphs">1</text>
<text x="746.00" y="1744.40" font-size="21" fill="#000" textLength="12.63" lengthAdjust="spacingAndGlyphs">0</text>
<text x="770.80" y="1744.40" font-size="21" fill="#000" textLength="12.03" lengthAdjust="spacingAndGlyphs">0</text>
<text x="865.40" y="1744.40" font-size="21" fill="#000" textLength="41.83" lengthAdjust="spacingAndGlyphs">22,8</text>
<text x="937.00" y="1744.40" font-size="21" fill="#000" textLength="29.20" lengthAdjust="spacingAndGlyphs">3,2</text>
<text x="996.00" y="1744.40" font-size="21" fill="#000" textLength="41.83" lengthAdjust="spacingAndGlyphs">39,0</text>
<text x="1241.70" y="1744.40" font-size="21" fill="#000" textLength="28.70" lengthAdjust="spacingAndGlyphs">1,8</text>
<text x="1361.10" y="1744.40" font-size="21" fill="#000" textLength="29.30" lengthAdjust="spacingAndGlyphs">0,2</text>
<text x="1485.50" y="1744.40" font-size="21" fill="#000" textLength="41.03" lengthAdjust="spacingAndGlyphs">32,6</text>
<text x="1583.30" y="1744.40" font-size="21" fill="#000" textLength="29.40" lengthAdjust="spacingAndGlyphs">0,4</text>
<text x="1721.00" y="1744.40" font-size="21" fill="#000" textLength="52.45" lengthAdjust="spacingAndGlyphs">100,0</text>
<text x="181.70" y="1775.80" font-size="18" fill="#000" textLength="1161.76" lengthAdjust="spacingAndGlyphs">setting 1: preset elements: C(not unfolding),O,Mg,Al,Si,Ca,Cr,Fe,Ni; optional elements: Na,P,S,K,Ti,Mn,Co,Cu,Zn (values normalized to 100%)</text>
</svg>
</body></html>
